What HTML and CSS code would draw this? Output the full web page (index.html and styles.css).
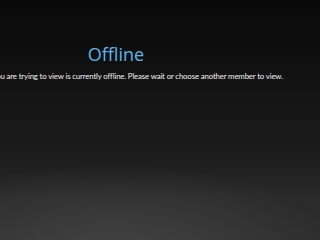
FILE: index.html
```html
<html>
    <head>
        <meta http-equiv="Content-Type" content="text/html; charset=utf-8" />
        <title>Offline</title>
        <link rel="stylesheet" href="styles.css">
    </head>
    <body>
        <div class="offline">
            <h1>Offline</h1>
            <p>The member you are trying to view is currently offline. Please wait or choose another member to view.</p>
        </div>
    </body>
</html>
```
FILE: styles.css
```css
html {
    height: 100%;
}

body {
    margin: 0;
    height: 100%;
    overflow: hidden;
    font-family: "Open Sans", "DejaVu Sans", sans-serif;
    background-color: #0a0a0a;
    background-image:
        radial-gradient(ellipse 220px 80px at 112px 245px, rgba(80, 80, 80, 0.6) 0%, rgba(80, 80, 80, 0) 100%),
        linear-gradient(to bottom, #0a0a0a 0%, #0e0e0e 20%, #181818 50%, #1c1c1c 65%, #2a2a2a 82%, #2e2e2e 100%);
}

.offline {
    width: 400px;
    margin-left: -84px;
    padding-top: 42px;
    text-align: center;
}

.offline h1 {
    margin: 0;
    color: #5eb4ec;
    font-size: 18px;
    font-weight: normal;
    line-height: 24px;
}

.offline p {
    margin: 4px 0 0 0;
    color: #f2f2f2;
    font-family: Lato, "Open Sans", sans-serif;
    font-size: 7.8px;
    letter-spacing: -0.14px;
    line-height: 12px;
    white-space: nowrap;
}
```
